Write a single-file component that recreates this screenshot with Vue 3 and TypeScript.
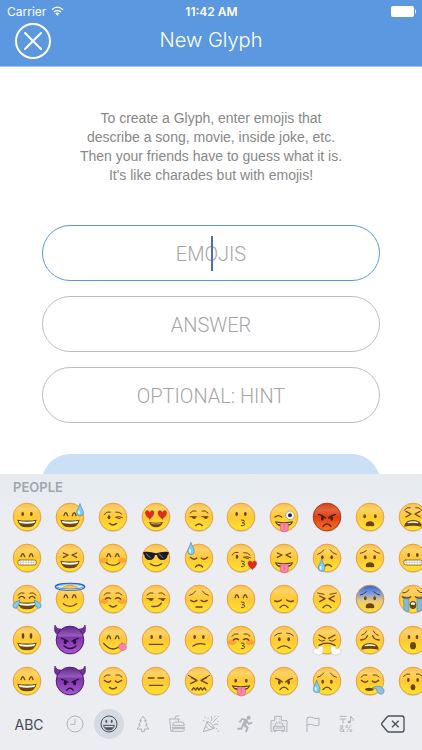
<script setup lang="ts">
import { ref } from 'vue'

interface Part {
  d: string
  fill?: string
  stroke?: string
  width?: number
}
interface Emoji {
  char: string
  name: string
  base?: string
  rim?: string
  parts: Part[]
}
interface Tab {
  name: string
  lines: string
  solid?: string
}

const INK = '#6b4512'
const WATER = '#86cbee'
const WATER_EDGE = '#3d8fc4'

const fill = (d: string, color = INK): Part => ({ d, fill: color })
const line = (d: string, width = 4, color = INK): Part => ({ d, stroke: color, width })
const oval = (x: number, y: number, rx: number, ry: number): string =>
  `M${x - rx} ${y}a${rx} ${ry} 0 1 0 ${2 * rx} 0a${rx} ${ry} 0 1 0 ${-2 * rx} 0Z`
const drop = (x: number, y: number): Part => ({
  d: `M${x} ${y - 18}C${x + 3} ${y - 8} ${x + 10} ${y} ${x + 10} ${y + 8}A10 10 0 0 1 ${x - 10} ${y + 8}C${x - 10} ${y} ${x - 3} ${y - 8} ${x} ${y - 18}Z`,
  fill: WATER,
  stroke: WATER_EDGE,
  width: 2,
})
const shine = (x: number, y: number): Part => fill(oval(x - 3, y + 7, 3, 6), '#dcf3fd')
const heart = (x: number, y: number): Part => ({
  d: `M${x} ${y + 13}C${x - 20} ${y - 1} ${x - 13} ${y - 14} ${x - 6} ${y - 12}Q${x - 1} ${y - 11} ${x} ${y - 6}Q${x + 1} ${y - 11} ${x + 6} ${y - 12}C${x + 13} ${y - 14} ${x + 20} ${y - 1} ${x} ${y + 13}Z`,
  fill: '#dc2e1c',
  stroke: '#a81a12',
  width: 1,
})

const dots: Part[] = [fill(oval(-13, -9, 4, 6)), fill(oval(13, -9, 4, 6))]
const tallDots: Part[] = [fill(oval(-12, -12, 4, 9)), fill(oval(12, -12, 4, 9))]
const lowDots: Part[] = [fill(oval(-14, -2, 4, 6)), fill(oval(14, -2, 4, 6))]
const happy: Part[] = [line('M-18-4Q-13-22-7-4M7-4Q13-22 18-4')]
const squeezed: Part[] = [line('M-20-15L-6-9L-20-2M20-15L6-9L20-2')]
const closed: Part[] = [line('M-26-2Q-15 8-7 0M26-2Q15 8 7 0')]
const smiling: Part[] = [line('M-23 0Q-15-7-7-1M23 0Q15-7 7-1')]
const archBrows: Part[] = [line('M-27-12Q-19-22-9-18M27-12Q19-22 9-18', 3)]
const sadBrows: Part[] = [line('M-28-11Q-16-14-10-24M28-11Q16-14 10-24', 3)]
const angry: Part[] = [line('M-25-8Q-14-6-5 3M25-8Q14-6 5 3'), fill(oval(-14, 4, 4, 7)), fill(oval(14, 4, 4, 7))]
const sly: Part[] = [
  line('M-27-1H-8M8-1H27', 3),
  fill('M-22 0H-9Q-10 7-15 6Q-20 5-22 0ZM13 0H26Q25 7 20 6Q15 5 13 0Z'),
]
const blush: Part[] = [fill(oval(-27, 7, 12, 8), '#f98b3699'), fill(oval(27, 7, 12, 8), '#f98b3699')]
const grin: Part[] = [
  fill('M-29 8Q0 13 29 8Q25 31 0 31Q-25 31-29 8Z'),
  fill('M-25 12Q0 16 25 12L22 18Q0 22-22 18Z', '#ffffff'),
]
const teeth: Part[] = [
  { d: 'M-22 6H22Q28 6 28 13Q28 21 22 21H-22Q-28 21-28 13Q-28 6-22 6Z', fill: '#ffffff', stroke: INK, width: 2 },
  line('M-27 13H27M-19 7V20M-11 7V20M-3 7V20M5 7V20M13 7V20M21 7V20', 1, '#9a8a78'),
]
const smile: Part[] = [line('M-20 14Q0 30 20 14')]
const smallSmile: Part[] = [line('M-11 19Q0 29 11 19')]
const flat: Part[] = [line('M-20 13H20')]
const frown: Part[] = [line('M-12 26Q0 11 12 26')]
const wideFrown: Part[] = [line('M-18 25Q0 10 18 25')]
const kiss: Part[] = [line('M1 9Q13 9 10 14Q8 17 3 17Q14 18 11 23Q8 27 1 26', 3)]
const tongue: Part[] = [
  fill('M-28 13Q0 18 28 13Q22 30 0 30Q-22 30-28 13Z'),
  fill('M-21 17Q0 20 21 17L19 20Q0 22-19 20Z', '#ffffff'),
  { d: 'M-11 20H13V35Q13 45 1 45Q-11 45-11 35Z', fill: '#f887a8', stroke: '#dc5c82', width: 2 },
  line('M1 23V36', 2, '#dc5c82'),
]
const gasp: Part[] = [fill('M-13 25Q-13 13 0 13Q13 13 13 25Q13 29 0 27Q-13 29-13 25Z')]
const wail: Part[] = [
  fill('M-26 29Q-25 9 0 9Q25 9 26 29Q0 23-26 29Z'),
  fill('M-17 16Q0 10 17 16L15 19Q0 15-15 19Z', '#ffffff'),
]
const HORNS = 'M-27-33Q-40-32-45-45Q-51-22-36-15ZM27-33Q40-32 45-45Q51-22 36-15Z'
const DEVIL_INK = '#2b0b44'
const devilEyes: Part[] = [
  line('M-25-5Q-14-3-6 4M25-5Q14-3 6 4', 4, DEVIL_INK),
  fill(oval(-14, 6, 5, 7), DEVIL_INK),
  fill(oval(14, 6, 5, 7), DEVIL_INK),
]

const emojis: Emoji[] = [
  { char: '😀', name: 'Grinning', parts: [...dots, ...grin] },
  { char: '😁', name: 'Beaming', parts: [...happy, ...teeth] },
  {
    char: '😂',
    name: 'Tears of joy',
    parts: [
      ...archBrows, line('M-24-3Q-15-13-7-3M24-3Q15-13 7-3'), ...grin,
      { d: 'M-22 4Q-26 28-35 28Q-44 27-42 17Q-38 8-22 4Z', fill: WATER, stroke: WATER_EDGE, width: 2 },
      { d: 'M22 4Q26 28 35 28Q44 27 42 17Q38 8 22 4Z', fill: WATER, stroke: WATER_EDGE, width: 2 },
    ],
  },
  { char: '😃', name: 'Big eyes grin', parts: [...tallDots, ...grin] },
  { char: '😄', name: 'Smiling eyes grin', parts: [...happy, ...grin] },

  { char: '😅', name: 'Sweat grin', parts: [...happy, ...grin, drop(30, -21), shine(30, -21)] },
  { char: '😆', name: 'Squinting grin', parts: [...squeezed, ...grin] },
  {
    char: '😇',
    name: 'Halo',
    parts: [...happy, ...smile, line(oval(0, -37, 43, 9), 6, '#2e62c4'), line(oval(0, -36, 41, 8), 3, '#8fd3f5')],
  },
  {
    char: '😈', name: 'Smiling devil', base: 'devil', rim: '#4d1c72',
    parts: [...devilEyes, line('M-18 18Q0 33 18 18', 4, DEVIL_INK)],
  },
  {
    char: '👿', name: 'Angry devil', base: 'devil', rim: '#4d1c72',
    parts: [...devilEyes, line('M-10 28Q0 15 10 28', 4, DEVIL_INK)],
  },

  {
    char: '😉', name: 'Wink',
    parts: [line('M-27-7Q-19-19-8-15M8-15Q20-16 26-9', 3), fill(oval(-12, 1, 4, 6)), line('M28 2Q17-4 8 1L21 5', 3), ...smallSmile],
  },
  { char: '😊', name: 'Blushing smile', parts: [...blush, ...happy, ...smile] },
  { char: '☺️', name: 'Relaxed', parts: [...blush, ...archBrows, ...smiling, ...smallSmile] },
  {
    char: '😋', name: 'Savouring',
    parts: [
      ...happy, line('M-28 10Q0 44 28 10'),
      { d: 'M18 24Q14 15 24 12Q34 6 39 16Q43 27 34 31Q23 34 18 24Z', fill: '#f98cae', stroke: '#e0648a', width: 2 },
    ],
  },
  { char: '😌', name: 'Relieved', parts: [...archBrows, ...closed, ...smallSmile] },

  {
    char: '😍', name: 'Heart eyes',
    parts: [heart(-19, -7), heart(19, -7), fill('M-21 15Q0 20 21 15Q16 31 0 31Q-16 31-21 15Z'), fill('M-15 18Q0 22 15 18L13 20Q0 23-13 20Z', '#e9dcc0')],
  },
  {
    char: '😎', name: 'Sunglasses',
    parts: [
      fill('M-38-18Q-18-20 0-14Q18-20 38-18V-12L35-9Q33 6 19 6Q6 6 3-9H-3Q-6 6-19 6Q-33 6-35-9L-38-12Z', '#1b1a1c'),
      line('M-29-12L-17-1M9-12L21-1', 4, '#626065'), line('M-17 17Q0 30 17 17'),
    ],
  },
  { char: '😏', name: 'Smirk', parts: [...archBrows, ...sly, line('M-13 22Q10 25 16 12')] },
  { char: '😐', name: 'Neutral', parts: [...dots, ...flat] },
  { char: '😑', name: 'Expressionless', parts: [line('M-23-9H-6M6-9H23'), ...flat] },

  { char: '😒', name: 'Unamused', parts: [...archBrows, ...sly, line('M-10 26Q0 16 10 26')] },
  { char: '😓', name: 'Cold sweat', parts: [...closed, line('M-11 27Q0 15 11 27'), drop(-24, -28), shine(-24, -28)] },
  { char: '😔', name: 'Pensive', parts: [...sadBrows, line('M-25 4Q-15 12-6 4M25 4Q15 12 6 4'), line('M-9 24H9')] },
  { char: '😕', name: 'Confused', parts: [...dots, line('M-18 18Q-2 7 18 13')] },
  {
    char: '😖', name: 'Confounded',
    parts: [line('M-32-17L-11-6M32-17L11-6', 3), line('M-23-10L-6-2L-25 8M23-10L6-2L25 8'), line('M-21 27L-16 20L-10 27L-5 20L0 27L5 20L10 27L16 20L21 27')],
  },

  { char: '😗', name: 'Kissing', parts: [...dots, ...kiss] },
  {
    char: '😘', name: 'Blowing a kiss',
    parts: [line('M-27-9Q-20-20-9-17M8-16Q20-18 27-9', 3), fill(oval(-12, -4, 4, 6)), line('M28-1Q17-7 7-2L22 2', 3), ...kiss, heart(34, 21)],
  },
  { char: '😙', name: 'Kissing smile', parts: [...happy, ...kiss] },
  { char: '😚', name: 'Kissing blush', parts: [...blush, ...archBrows, ...smiling, ...kiss] },
  { char: '😛', name: 'Tongue out', parts: [fill(oval(-16, -1, 4, 6)), fill(oval(16, -1, 4, 6)), ...tongue] },

  {
    char: '😜', name: 'Winking tongue',
    parts: [line('M-27 0Q-17-8-7 0'), ...tongue, { d: oval(18, -5, 13, 13), fill: '#ffffff', stroke: '#8f8a80', width: 2 }, fill(oval(18, -5, 6, 6), '#1f2d35')],
  },
  { char: '😝', name: 'Squinting tongue', parts: [...squeezed, ...tongue] },
  { char: '😞', name: 'Disappointed', parts: [line('M-28 6Q-17 10-8 3M28 6Q17 10 8 3'), ...frown] },
  { char: '😟', name: 'Worried', parts: [line('M-28-13Q-21-21-8-21M28-13Q21-21 8-21', 3), ...lowDots, ...wideFrown] },
  { char: '😠', name: 'Angry', parts: [...angry, ...frown] },

  { char: '😡', name: 'Pouting', base: 'rage', rim: '#a83b16', parts: [...angry.map((p) => ({ ...p, fill: p.fill && '#4b1709', stroke: p.stroke && '#4b1709' })), line('M-12 28Q0 13 12 28', 4, '#4b1709')] },
  { char: '😢', name: 'Crying', parts: [...sadBrows, ...lowDots, line('M-8 26Q2 13 14 26'), drop(-16, 22), shine(-16, 22)] },
  { char: '😣', name: 'Persevering', parts: [line('M-28-18L-9-14M28-18L9-14', 3), line('M-22-9L-6-1L-22 8M22-9L6-1L22 8'), ...frown] },
  {
    char: '😤', name: 'Triumph',
    parts: [
      line('M-24-15L-5-5M24-15L5-5', 4), line('M-25-1Q-16 8-7 1M25-1Q16 8 7 1', 3), line('M-24 16Q0 3 24 16', 4),
      { d: 'M-12 18Q-9 32-15 42Q-25 49-34 42Q-45 41-41 29Q-36 22-28 27Q-26 18-12 18Z', fill: '#ffffff', stroke: '#c3cbd3', width: 2 },
      { d: 'M12 18Q9 32 15 42Q25 49 34 42Q45 41 41 29Q36 22 28 27Q26 18 12 18Z', fill: '#ffffff', stroke: '#c3cbd3', width: 2 },
    ],
  },
  { char: '😥', name: 'Sad relieved', parts: [...sadBrows, fill(oval(-13, 2, 4, 6)), fill(oval(13, 2, 4, 6)), ...frown, drop(-31, 17), shine(-31, 17)] },

  { char: '😦', name: 'Frowning open', parts: [fill(oval(-16, -2, 4, 6)), fill(oval(16, -2, 4, 6)), ...gasp] },
  { char: '😧', name: 'Anguished', parts: [line('M-29-14Q-19-16-11-22M29-14Q19-16 11-22', 3), ...lowDots, ...gasp] },
  { char: '😨', name: 'Fearful', base: 'fear', rim: '#c99350', parts: [line('M-29-12Q-19-14-11-22M29-12Q19-14 11-22', 3, '#32355e'), ...lowDots, ...gasp] },
  { char: '😩', name: 'Weary', parts: [line('M-25-14Q-14-17-10-27M25-14Q14-17 10-27', 3), line('M-28 0Q-12 0-8-13M28 0Q12 0 8-13'), ...wail] },
  {
    char: '😪', name: 'Sleepy',
    parts: [
      ...archBrows, ...closed, fill(oval(-2, 25, 13, 5)),
      { d: 'M8 20Q20 12 32 17Q46 23 42 34Q38 43 28 38Q21 34 19 25Z', fill: '#8fbfe2', stroke: '#598fbb', width: 2 },
    ],
  },

  { char: '😫', name: 'Tired', parts: [line('M-27-20Q-19-31-8-28M27-20Q19-31 8-28', 3), line('M-21-17L-6-9L-21 0M21-17L6-9L21 0'), ...wail] },
  { char: '😬', name: 'Grimacing', parts: [...dots, ...teeth] },
  {
    char: '😭', name: 'Sobbing',
    parts: [
      line('M-31-18Q-19-18-12-27M31-18Q19-18 12-27', 3),
      { d: 'M-27-6H-12V37Q-20 39-27 33ZM27-6H12V37Q20 39 27 33Z', fill: '#84b9d8', stroke: '#5591b8', width: 2 },
      line('M-32-7Q-19 2-7-7M32-7Q19 2 7-7'), fill(oval(0, 18, 10, 12)), fill('M-6 12Q0 8 6 12V17H-6Z', '#ffffff'),
    ],
  },
  { char: '😮', name: 'Open mouth', parts: [fill(oval(-12, -9, 4, 6)), fill(oval(12, -9, 4, 6)), fill(oval(0, 17, 9, 11))] },
  { char: '😯', name: 'Hushed', parts: [line('M-28-14Q-20-24-10-21M28-14Q20-24 10-21', 3), fill(oval(-14, -3, 4, 6)), fill(oval(14, -3, 4, 6)), fill(oval(0, 19, 7, 9))] },
]

const tabs: Tab[] = [
  { name: 'Recent', lines: `${oval(0, 0, 24, 24)}M0-16V1H-14` },
  {
    name: 'People',
    lines: `${oval(0, 0, 24, 24)}M-16 4H16Q14 18 0 18Q-14 18-16 4Z`,
    solid: `${oval(-8, -8, 3, 5)}${oval(8, -8, 3, 5)}M-14 10H14Q9 18 0 18Q-9 18-14 10Z`,
  },
  { name: 'Nature', lines: 'M0-23L10-10H5L13 3H8L18 15H4V23H-4V15H-18L-8 3H-13L-5-10H-10Z' },
  {
    name: 'Food',
    lines: 'M-24-15H8M-22-15L-18 22H-12M5-15L4-7M-7-15L-4-23L7-25M-13 4Q-13-6-4-6H13Q22-6 22 4ZM-15 10H24M-13 14H22V17Q22 22 17 22H-8Q-13 22-13 17Z',
  },
  {
    name: 'Celebration',
    lines: 'M-23 23L-11-8Q6-1 10 13ZM-11-8Q-13 4 10 13M-17 6L-5 17M0-8Q6-15 0-23M8 3Q15-4 22 3M6-5L18-18',
    solid: `${oval(-18, -20, 2, 2)}${oval(-9, -17, 2, 2)}${oval(11, -22, 2, 2)}${oval(21, -22, 2, 2)}${oval(21, -8, 2, 2)}${oval(17, 14, 2, 2)}${oval(22, 21, 2, 2)}${oval(-22, -10, 2, 2)}`,
  },
  {
    name: 'Activity',
    lines: '',
    solid: `${oval(11, -19, 6, 6)}M-10-18L5-15Q10-13 8-8L12-4L21-7L23-2L11 3L6-3L3 3L11 10L6 25H0L4 12L-5 6L-9 17H-23V11H-13L-8 0L-3-11L-8-12L-14-3L-19-6Z`,
  },
  {
    name: 'Places',
    lines: 'M-24 22V-10H-13V-23H7V-10H24V22H19M-24 22H-19M-13 7L-9-3H9L13 7M-17 7H17V19H-17ZM-14 19V23H-9V19M9 19V23H14V19M-8 12H8M-7-17V-14M2-17V-14M-7-9V-7M2-9V-7M16-3V-1M-18-3V-1',
    solid: `${oval(-12, 12, 2, 2)}${oval(12, 12, 2, 2)}`,
  },
  { name: 'Objects', lines: 'M-18 24V-19Q-8-24 1-18Q9-14 18-18V3Q9 8 1 3Q-8-2-18 3' },
]

const fields = [
  { id: 'emojis', label: 'EMOJIS' },
  { id: 'answer', label: 'ANSWER' },
  { id: 'hint', label: 'OPTIONAL: HINT' },
]
const values = ref<Record<string, string>>({ emojis: '', answer: '', hint: '' })
const active = ref('emojis')
const activeTab = ref('People')

function insert(char: string): void {
  values.value[active.value] += char
}
function erase(): void {
  values.value[active.value] = Array.from(values.value[active.value]).slice(0, -1).join('')
}
</script>

<template>
  <div class="screen">
    <header class="header">
      <div class="status">
        <span class="carrier">
          Carrier
          <svg class="wifi" viewBox="0 0 39 30" aria-hidden="true">
            <path d="M3 11Q19-4 36 11M9 18Q19 9 30 18" fill="none" stroke="#fff" stroke-width="4" />
            <path d="M13 22Q19 17 26 22L19 29Z" fill="#fff" />
          </svg>
        </span>
        <span class="time">11:42 AM</span>
        <svg class="battery" viewBox="0 0 25 11" aria-hidden="true">
          <rect width="23" height="11" rx="2" fill="#fff" />
          <path d="M24 3Q25 4 25 5.500Q25 7 24 8Z" fill="#fff" />
        </svg>
      </div>
      <nav class="nav">
        <button class="close" type="button" aria-label="Close">
          <svg viewBox="0 0 36 36" aria-hidden="true">
            <circle cx="18" cy="18" r="17" />
            <path d="M10 10L26 26M26 10L10 26" />
          </svg>
        </button>
        <h1 class="title">New Glyph</h1>
      </nav>
    </header>

    <main class="content">
      <p class="intro">
        To create a Glyph, enter emojis that<br />
        describe a song, movie, inside joke, etc.<br />
        Then your friends have to guess what it is.<br />
        It's like charades but with emojis!
      </p>
      <form class="form" @submit.prevent>
        <div v-for="f in fields" :key="f.id" class="field" :class="{ focused: active === f.id }">
          <input
            :id="f.id"
            v-model="values[f.id]"
            type="text"
            :placeholder="f.label"
            :aria-label="f.label"
            autocomplete="off"
            @focus="active = f.id"
          />
          <span v-if="active === f.id && !values[f.id]" class="caret"></span>
        </div>
        <button class="submit" type="submit" aria-label="Create"></button>
      </form>
    </main>

    <section class="keyboard" aria-label="Emoji keyboard">
      <svg class="defs" width="0" height="0" aria-hidden="true">
        <defs>
          <linearGradient id="face" x1="0" y1="0" x2="0" y2="1">
            <stop offset="0" stop-color="#fbbd45" />
            <stop offset="0.2" stop-color="#fdd267" />
            <stop offset="0.5" stop-color="#fdc935" />
            <stop offset="1" stop-color="#ffe52e" />
          </linearGradient>
          <linearGradient id="rage" x1="0" y1="0" x2="0" y2="1">
            <stop offset="0" stop-color="#d3411c" />
            <stop offset="0.25" stop-color="#e4653e" />
            <stop offset="0.5" stop-color="#dc3f14" />
            <stop offset="1" stop-color="#f9751d" />
          </linearGradient>
          <linearGradient id="devil" x1="0" y1="0" x2="0" y2="1">
            <stop offset="0" stop-color="#60258b" />
            <stop offset="0.35" stop-color="#965dbb" />
            <stop offset="0.4" stop-color="#7c36a8" />
            <stop offset="1" stop-color="#ab57cf" />
          </linearGradient>
          <linearGradient id="fear" x1="0" y1="0" x2="0" y2="1">
            <stop offset="0" stop-color="#3462cf" />
            <stop offset="0.3" stop-color="#7f9bdd" />
            <stop offset="0.58" stop-color="#eccb72" />
            <stop offset="1" stop-color="#ffe02b" />
          </linearGradient>
        </defs>
      </svg>
      <h2 class="category">PEOPLE</h2>
      <div class="emojis">
        <button v-for="e in emojis" :key="e.name" class="emoji" type="button" :aria-label="e.name" @click="insert(e.char)">
          <svg viewBox="-51 -51 102 102" aria-hidden="true">
            <path v-if="e.base === 'devil'" :d="HORNS" fill="#72309d" stroke="#4d1c72" stroke-width="2" />
            <ellipse cx="0" cy="3" rx="41" ry="42" fill="#8a7a6440" />
            <circle r="41.500" :fill="`url(#${e.base ?? 'face'})`" :stroke="e.rim ?? '#e99f45'" stroke-width="3" />
            <path
              v-for="(p, i) in e.parts"
              :key="i"
              :d="p.d"
              :fill="p.fill ?? 'none'"
              :stroke="p.stroke ?? 'none'"
              :stroke-width="p.width ?? 0"
              stroke-linecap="round"
              stroke-linejoin="round"
            />
          </svg>
        </button>
      </div>
      <div class="bar">
        <button class="abc" type="button">ABC</button>
        <button
          v-for="t in tabs"
          :key="t.name"
          class="tab"
          :class="{ selected: activeTab === t.name }"
          type="button"
          :aria-label="t.name"
          @click="activeTab = t.name"
        >
          <svg viewBox="-30 -30 60 60" aria-hidden="true">
            <path :d="t.lines" class="lines" />
            <path v-if="t.solid" :d="t.solid" class="solid" />
          </svg>
        </button>
        <button class="tab symbols" type="button" aria-label="Symbols" @click="activeTab = 'Symbols'">
          <svg viewBox="-30 -30 60 60" aria-hidden="true">
            <path class="lines" d="M-22-23H-2M-22-15H-2M-12-15V-1M11-6V-24Q12-17 20-15Q20-11 18-9" />
            <ellipse class="solid" cx="7" cy="-6" rx="5" ry="4" />
            <text x="-23" y="24">&amp;%</text>
          </svg>
        </button>
        <button class="delete" type="button" aria-label="Delete" @click="erase">
          <svg viewBox="0 0 72 54" aria-hidden="true">
            <path d="M24 3H62Q69 3 69 10V44Q69 51 62 51H24Q21 51 18 48L3 30Q1 27 3 24L18 6Q21 3 24 3ZM33 17L53 37M53 17L33 37" />
          </svg>
        </button>
      </div>
    </section>
  </div>
</template>

<style>
body {
  margin: 0;
  background: #fff;
}
</style>

<style scoped>
.screen {
  display: flex;
  flex-direction: column;
  height: 100vh;
  overflow: hidden;
  background: #fff;
  font-family: 'Liberation Sans', Arial, sans-serif;
}
button {
  margin: 0;
  padding: 0;
  border: 0;
  background: none;
  font: inherit;
  cursor: pointer;
}
svg {
  display: block;
}
.header {
  flex: none;
  padding-bottom: 7px;
  border-bottom: 1px solid #9fc4ee;
  background: #5b98df;
  color: #fff;
}
.status {
  display: grid;
  grid-template-columns: 1fr auto 1fr;
  align-items: center;
  height: 22px;
  padding: 0 6px 0 7px;
  font-family: Inter, sans-serif;
  font-size: 12px;
}
.carrier {
  display: flex;
  align-items: center;
  gap: 5px;
}
.wifi {
  width: 13px;
  height: 10px;
}
.time {
  font-weight: 600;
}
.battery {
  justify-self: end;
  width: 25px;
  height: 11px;
}
.nav {
  display: grid;
  grid-template-columns: 1fr auto 1fr;
  align-items: center;
  height: 37px;
  padding: 0 15px;
}
.close {
  width: 36px;
  height: 36px;
}
.close svg {
  fill: none;
  stroke: #fff;
  stroke-width: 2;
  stroke-linecap: round;
}
.title {
  margin: 0;
  font-family: Inter, sans-serif;
  font-size: 20px;
  font-weight: 300;
  line-height: 37px;
}
.content {
  flex: 1;
  min-height: 0;
  overflow: hidden;
  padding: 42px 10% 0;
}
.intro {
  margin: 0 0 40px;
  color: #888;
  font-size: 14px;
  line-height: 19px;
  text-align: center;
  white-space: nowrap;
}
.form {
  display: flex;
  flex-direction: column;
  gap: 15px;
}
.field {
  position: relative;
  display: flex;
  height: 54px;
  border: 1px solid #bdbdbd;
  border-radius: 28px;
}
.field.focused {
  border-color: #5b98df;
}
.field input {
  width: 100%;
  min-width: 0;
  padding: 2px 20px 0;
  border: 0;
  outline: 0;
  background: none;
  color: #555;
  font-family: Roboto, sans-serif;
  font-size: 20px;
  font-weight: 300;
  text-align: center;
}
.field input::placeholder {
  color: #a6a6a6;
  opacity: 1;
}
.caret {
  position: absolute;
  top: 10px;
  left: 50%;
  width: 2px;
  height: 35px;
  background: #4a6bca;
}
.submit {
  height: 56px;
  margin-top: 16px;
  border-radius: 28px;
  background: #cbdff7;
}
.keyboard {
  flex: none;
  overflow: hidden;
  background: linear-gradient(#e6ebf0, #ecedf1 60px);
}
.defs {
  position: absolute;
}
.category {
  margin: 0;
  padding: 4px 13px 0;
  color: #a2a6ab;
  font-family: Inter, sans-serif;
  font-size: 13px;
  font-weight: 600;
  line-height: 18px;
}
.emojis {
  display: grid;
  grid-auto-flow: column;
  grid-template-rows: repeat(5, 41px);
  grid-auto-columns: 10%;
  width: calc(100% + 6px);
  margin-left: 6px;
}
.emoji {
  display: grid;
  place-items: center;
}
.emoji svg {
  width: 34px;
  height: 34px;
  overflow: visible;
}
.bar {
  display: grid;
  grid-template-columns: 58fr repeat(9, 34fr) 58fr;
  align-items: center;
  height: 46px;
  padding-bottom: 3px;
  justify-items: center;
}
.abc {
  color: #474c55;
  font-family: Inter, sans-serif;
  font-size: 14px;
}
.tab {
  display: grid;
  place-items: center;
  width: 30px;
  height: 30px;
  border-radius: 50%;
  color: #b0b3b8;
}
.tab.selected {
  background: #d5dae1;
  color: #4b5361;
}
.tab svg {
  width: 20px;
  height: 20px;
  overflow: visible;
}
.lines {
  fill: none;
  stroke: currentColor;
  stroke-width: 3;
  stroke-linejoin: round;
}
.solid {
  fill: currentColor;
}
.symbols text {
  fill: currentColor;
  font-family: Inter, sans-serif;
  font-size: 25px;
}
.delete svg {
  width: 24px;
  height: 18px;
  fill: none;
  stroke: #4b5059;
  stroke-width: 4;
  stroke-linejoin: round;
}
</style>
